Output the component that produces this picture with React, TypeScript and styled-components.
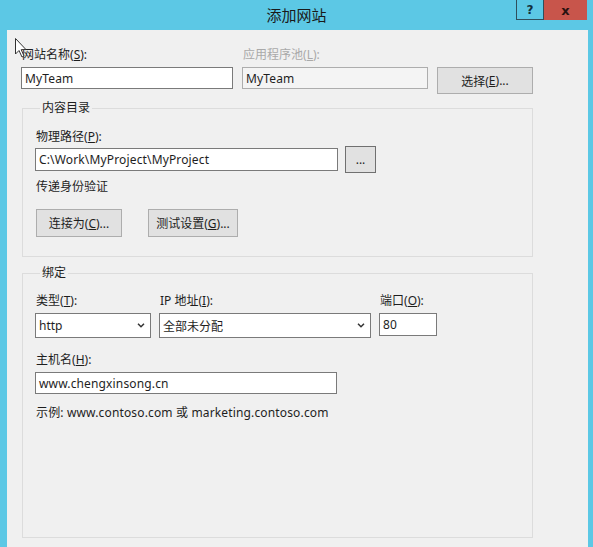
import React from 'react';
import styled, { createGlobalStyle } from 'styled-components';

const GlobalStyle = createGlobalStyle`
  html, body {
    margin: 0;
    padding: 0;
    overflow: hidden;
  }
  body {
    font-family: "Noto Sans", "Noto Sans CJK SC", sans-serif;
    font-size: 12px;
    color: #1e1e1e;
  }
`;

const Mnemonic: React.FC<{ label: string; accessKey: string; trail?: string }> = ({ label, accessKey, trail = ':' }) => (
  <>
    {label}(<u>{accessKey}</u>){trail}
  </>
);

const App: React.FC = () => {
  return (
    <Window>
      <GlobalStyle />
      <TitleBar>
        <span />
        <Title>添加网站</Title>
        <Caption>
          <HelpButton>?</HelpButton>
          <CloseButton>x</CloseButton>
        </Caption>
      </TitleBar>

      <Body>
        <Pointer width="12" height="20" viewBox="0 0 12 20">
          <path d="M0.5 0.5 L0.5 16 L4 12.5 L7 19 L9 18 L6.2 11.6 L11 11.6 Z" fill="#fff" stroke="#333" strokeWidth="1" />
        </Pointer>

        <SiteRow>
          <Field>
            <Label><Mnemonic label="网站名称" accessKey="S" /></Label>
            <TextBox width={212}>MyTeam</TextBox>
          </Field>
          <Field>
            <Label disabled><Mnemonic label="应用程序池" accessKey="L" /></Label>
            <TextBox width={186} disabled>MyTeam</TextBox>
          </Field>
          <Field>
            <Label>&nbsp;</Label>
            <Button width={96}><Mnemonic label="选择" accessKey="E" trail="..." /></Button>
          </Field>
        </SiteRow>

        <Group>
          <Legend>内容目录</Legend>
          <Label><Mnemonic label="物理路径" accessKey="P" /></Label>
          <PathRow>
            <TextBox width={303} height={23}>C:\Work\MyProject\MyProject</TextBox>
            <Button width={31} height={27} dark>...</Button>
          </PathRow>
          <Note>传递身份验证</Note>
          <ButtonRow>
            <Button width={86} height={28}><Mnemonic label="连接为" accessKey="C" trail="..." /></Button>
            <Button width={90} height={28}><Mnemonic label="测试设置" accessKey="G" trail="..." /></Button>
          </ButtonRow>
        </Group>

        <Group grow>
          <Legend>绑定</Legend>
          <BindingRow>
            <Field>
              <Label><Mnemonic label="类型" accessKey="T" /></Label>
              <Select width={116}>http<Chevron /></Select>
            </Field>
            <Field>
              <Label>IP 地址(<u>I</u>):</Label>
              <Select width={212}>全部未分配<Chevron /></Select>
            </Field>
            <Field>
              <Label><Mnemonic label="端口" accessKey="O" /></Label>
              <TextBox width={58} height={23}>80</TextBox>
            </Field>
          </BindingRow>
          <HostField>
            <Label><Mnemonic label="主机名" accessKey="H" /></Label>
            <TextBox width={302}>www.chengxinsong.cn</TextBox>
          </HostField>
          <Example>示例: www.contoso.com 或 marketing.contoso.com</Example>
        </Group>
      </Body>
    </Window>
  );
};

export default App;

const Chevron: React.FC = () => (
  <ChevronIcon width="8" height="5" viewBox="0 0 8 5">
    <path d="M1 0.8 L4 3.8 L7 0.8" fill="none" stroke="#333" strokeWidth="1.5" />
  </ChevronIcon>
);

const Window = styled.div`
  width: 593px;
  height: 547px;
  background: #5cc8e5;
  display: flex;
  flex-direction: column;
`;

const TitleBar = styled.div`
  height: 30px;
  display: grid;
  grid-template-columns: 1fr auto 1fr;
  flex-shrink: 0;
`;

const Title = styled.div`
  font-family: "Noto Sans CJK SC", sans-serif;
  font-size: 15px;
  line-height: 29px;
  color: #1a1a1a;
`;

const Caption = styled.div`
  justify-self: end;
  align-self: start;
  display: flex;
  margin-right: 6px;
`;

const CaptionButton = styled.div`
  height: 20px;
  display: flex;
  align-items: center;
  justify-content: center;
  font-family: "DejaVu Sans", sans-serif;
  font-weight: bold;
  font-size: 12px;
  box-sizing: border-box;
`;

const HelpButton = styled(CaptionButton)`
  width: 28px;
  border: 1px solid #2f4f5c;
  border-top: none;
  color: #12303c;
`;

const CloseButton = styled(CaptionButton)`
  width: 43px;
  background: #c8554b;
  color: #2a1210;
  font-size: 13px;
`;

const Body = styled.div`
  position: relative;
  flex: 1;
  margin: 0 5px 0 7px;
  background: #f0f0f0;
  padding: 17px 0 9px 14px;
  display: flex;
  flex-direction: column;
  box-sizing: border-box;
`;

const Pointer = styled.svg`
  position: absolute;
  left: 8px;
  top: 8px;
`;

const SiteRow = styled.div`
  display: flex;
  gap: 9px;
  align-items: flex-start;
`;

const Field = styled.div`
  display: flex;
  flex-direction: column;
  gap: 4px;
`;

const Label = styled.div<{ disabled?: boolean }>`
  line-height: 16px;
  padding-left: 1px;
  color: ${(p) => (p.disabled ? '#a9a9a9' : '#1e1e1e')};
  white-space: nowrap;

  u {
    text-underline-offset: 1px;
  }
`;

const TextBox = styled.div<{ width: number; height?: number; disabled?: boolean }>`
  width: ${(p) => p.width}px;
  height: ${(p) => p.height ?? 22}px;
  box-sizing: border-box;
  border: 1px solid ${(p) => (p.disabled ? '#adadad' : '#7a7a7a')};
  background: ${(p) => (p.disabled ? '#f4f4f4' : '#ffffff')};
  padding: 0 3px;
  display: flex;
  align-items: center;
  white-space: nowrap;
  letter-spacing: 0.15px;
`;

const Button = styled.div<{ width: number; height?: number; dark?: boolean }>`
  width: ${(p) => p.width}px;
  height: ${(p) => p.height ?? 27}px;
  box-sizing: border-box;
  border: 1px solid ${(p) => (p.dark ? '#707070' : '#adadad')};
  background: #e1e1e1;
  display: flex;
  align-items: center;
  justify-content: center;
  white-space: nowrap;
`;

const Group = styled.fieldset<{ grow?: boolean }>`
  margin: 6px 0 0 1px;
  width: 511px;
  box-sizing: border-box;
  border: 1px solid #dcdcdc;
  padding: 13px 0 0 12px;
  display: flex;
  flex-direction: column;
  ${(p) => (p.grow ? 'flex: 1; min-height: 0; margin-top: 8px; padding-top: 12px;' : 'height: 157px;')}
`;

const Legend = styled.legend`
  padding: 0 2px;
  margin-left: 5px;
  line-height: 16px;
`;

const PathRow = styled.div`
  display: flex;
  align-items: center;
  gap: 7px;
  margin-top: 1px;
`;

const Note = styled.div`
  line-height: 16px;
  padding-left: 1px;
  margin-top: 6px;
`;

const ButtonRow = styled.div`
  display: flex;
  gap: 26px;
  margin-top: 14px;
  padding-left: 1px;
`;

const BindingRow = styled.div`
  display: flex;
  gap: 8px;
  align-items: flex-start;
`;

const Select = styled.div<{ width: number }>`
  width: ${(p) => p.width}px;
  height: 25px;
  box-sizing: border-box;
  border: 1px solid #7a7a7a;
  background: #ffffff;
  padding: 0 5px 0 3px;
  display: flex;
  align-items: center;
  justify-content: space-between;
  white-space: nowrap;
`;

const ChevronIcon = styled.svg`
  flex-shrink: 0;
`;

const HostField = styled(Field)`
  margin-top: 14px;
`;

const Example = styled.div`
  line-height: 16px;
  margin-top: 11px;
  padding-left: 1px;
  letter-spacing: 0.15px;
`;
